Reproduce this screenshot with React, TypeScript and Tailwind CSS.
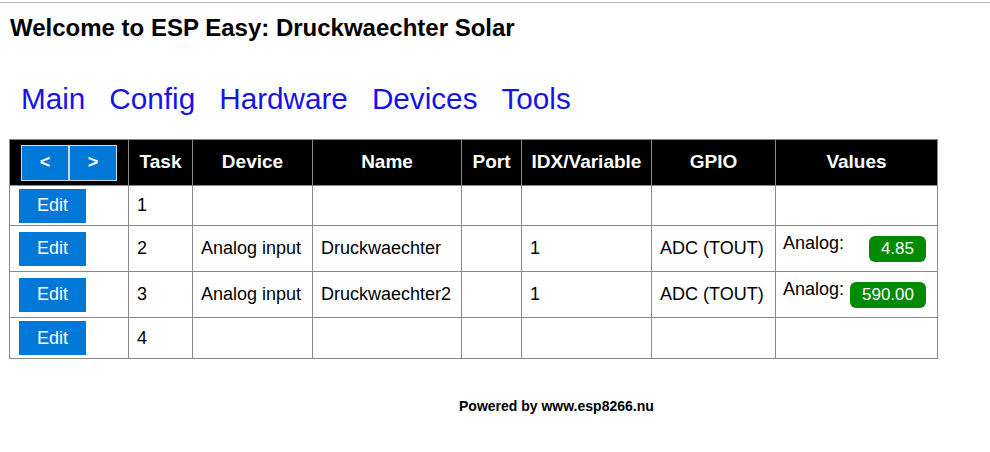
import React from "react";

type Row = {
  task: number;
  device?: string;
  name?: string;
  idx?: string;
  gpio?: string;
  value?: string;
  h: string;
};

const rows: Row[] = [
  { task: 1, h: "h-[40px]" },
  { task: 2, device: "Analog input", name: "Druckwaechter", idx: "1", gpio: "ADC (TOUT)", value: "4.85", h: "h-[46px]" },
  { task: 3, device: "Analog input", name: "Druckwaechter2", idx: "1", gpio: "ADC (TOUT)", value: "590.00", h: "h-[46px]" },
  { task: 4, h: "h-[41px]" },
];

const cell = "border border-[#8a8a8a] px-2 text-[18px] text-black align-middle";
const head = "border border-[#8a8a8a] bg-black text-white font-bold text-[19px] text-center align-middle";

export default function App() {
  return (
    <div className="min-h-[452px] w-[990px] bg-white border-t border-[#b0b0b0] mt-[2px] font-['Liberation_Sans',Arial,sans-serif]">
      <h1 className="pl-[10px] pt-[11px] text-[24px] font-bold text-black leading-[28px]">
        Welcome to ESP Easy: Druckwaechter Solar
      </h1>

      <nav className="mt-[40px] pl-[21px] flex gap-[24px] text-[29.7px] leading-[34px] text-[#1414e6]">
        <a>Main</a>
        <a>Config</a>
        <a>Hardware</a>
        <a>Devices</a>
        <a>Tools</a>
      </nav>

      <table className="ml-[9px] mt-[23px] border-collapse table-fixed w-[928px]">
        <colgroup>
          <col className="w-[119px]" />
          <col className="w-[64px]" />
          <col className="w-[120px]" />
          <col className="w-[149px]" />
          <col className="w-[60px]" />
          <col className="w-[130px]" />
          <col className="w-[124px]" />
          <col className="w-[162px]" />
        </colgroup>
        <thead>
          <tr className="h-[46px]">
            <th className="border border-[#8a8a8a] bg-black px-[11px] align-middle">
              <div className="flex">
                <button className="w-[48px] h-[36px] bg-[#0078d7] border border-[#c8dcf0] text-white font-bold text-[18px]">
                  &lt;
                </button>
                <button className="w-[48px] h-[36px] bg-[#0078d7] border border-[#c8dcf0] text-white font-bold text-[18px]">
                  &gt;
                </button>
              </div>
            </th>
            <th className={head}>Task</th>
            <th className={head}>Device</th>
            <th className={head}>Name</th>
            <th className={head}>Port</th>
            <th className={head}>IDX/Variable</th>
            <th className={head}>GPIO</th>
            <th className={head}>Values</th>
          </tr>
        </thead>
        <tbody>
          {rows.map((r) => (
            <tr key={r.task} className={r.h}>
              <td className="border border-[#8a8a8a] px-[9px] align-middle">
                <button className="w-[67px] h-[34px] bg-[#0078d7] text-white text-[18px]">Edit</button>
              </td>
              <td className={cell}>{r.task}</td>
              <td className={cell}>{r.device}</td>
              <td className={cell}>{r.name}</td>
              <td className={cell}></td>
              <td className={cell}>{r.idx}</td>
              <td className={cell}>{r.gpio}</td>
              <td className="border border-[#8a8a8a] pl-[7px] pr-[11px] align-middle text-[18px] text-black">
                {r.value && (
                  <div className="flex items-start justify-between">
                    <span className="leading-[20px] -mt-[2px]">Analog:</span>
                    <span className="bg-[#008a00] text-white text-[17px] rounded-[6px] px-[12px] leading-[26px] mt-[1px]">
                      {r.value}
                    </span>
                  </div>
                )}
              </td>
            </tr>
          ))}
        </tbody>
      </table>

      <p className="mt-[37px] pl-[459px] text-[14px] font-bold text-black">Powered by www.esp8266.nu</p>
    </div>
  );
}
